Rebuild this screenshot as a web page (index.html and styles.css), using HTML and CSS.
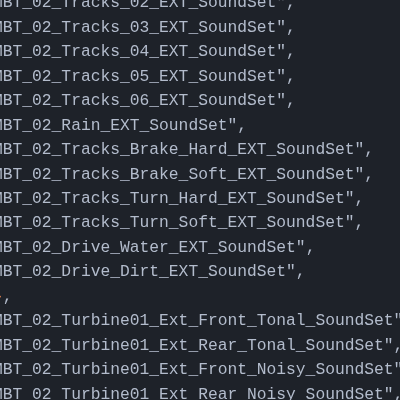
FILE: index.html
```html
<!DOCTYPE html>
<html lang="en">
  <head>
    <meta charset="UTF-8" />
    <meta name="viewport" content="width=device-width, initial-scale=1.0" />
    <title>SoundSets</title>
    <link rel="stylesheet" href="styles.css">
  </head>
  <body>
    <main class="editor">
      <!-- cropped view of the sound set list -->
      <pre class="code"><span class="str">"MBT_02_Tracks_02_EXT_SoundSet"</span>,
<span class="str">"MBT_02_Tracks_03_EXT_SoundSet"</span>,
<span class="str">"MBT_02_Tracks_04_EXT_SoundSet"</span>,
<span class="str">"MBT_02_Tracks_05_EXT_SoundSet"</span>,
<span class="str">"MBT_02_Tracks_06_EXT_SoundSet"</span>,
<span class="str">"MBT_02_Rain_EXT_SoundSet"</span>,
<span class="str">"MBT_02_Tracks_Brake_Hard_EXT_SoundSet"</span>,
<span class="str">"MBT_02_Tracks_Brake_Soft_EXT_SoundSet"</span>,
<span class="str">"MBT_02_Tracks_Turn_Hard_EXT_SoundSet"</span>,
<span class="str">"MBT_02_Tracks_Turn_Soft_EXT_SoundSet"</span>,
<span class="str">"MBT_02_Drive_Water_EXT_SoundSet"</span>,
<span class="str">"MBT_02_Drive_Dirt_EXT_SoundSet"</span>,
 <span class="brace">}</span>,
<span class="str">"MBT_02_Turbine01_Ext_Front_Tonal_SoundSet"</span>,
<span class="str">"MBT_02_Turbine01_Ext_Rear_Tonal_SoundSet"</span>,
<span class="str">"MBT_02_Turbine01_Ext_Front_Noisy_SoundSet"</span>,
<span class="str">"MBT_02_Turbine01_Ext_Rear_Noisy_SoundSet"</span>,</pre>
    </main>
  </body>
</html>
```

FILE: styles.css
```css
:root {
  --bg: #1e2229;
  --text: #b3bccc;
  --brace: #d0784a;
  --mono: "Liberation Mono", "DejaVu Sans Mono", monospace;
}

* {
  box-sizing: border-box;
}

html,
body {
  height: 100%;
  margin: 0;
  background: var(--bg);
  overflow: hidden;
}

.editor {
  height: 100%;
  overflow: hidden;
}

/* the screenshot is soft, so blur the text a touch */
.code {
  margin: -8.6px 0 0 -16.8px;
  font-family: var(--mono);
  font-size: 16.3px;
  line-height: 24.45px;
  color: var(--text);
  white-space: pre;
  filter: blur(0.35px);
}

.brace {
  color: var(--brace);
}
```
